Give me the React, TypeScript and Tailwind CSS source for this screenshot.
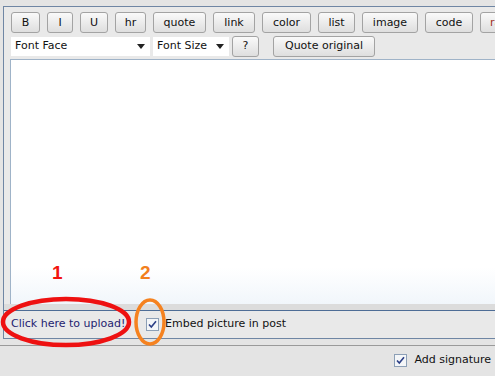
import React from 'react'

const font = { fontFamily: 'Tahoma, "DejaVu Sans", Verdana, sans-serif' }

const tools = [
  { label: 'B', w: 'w-[29px]' },
  { label: 'I', w: 'w-[26px]' },
  { label: 'U', w: 'w-[28px]' },
  { label: 'hr', w: 'w-[31px]' },
  { label: 'quote', w: 'w-[53px]' },
  { label: 'link', w: 'w-[42px]' },
  { label: 'color', w: 'w-[49px]' },
  { label: 'list', w: 'w-[37px]' },
  { label: 'image', w: 'w-[56px]' },
  { label: 'code', w: 'w-[48px]' },
  { label: 'raw', w: 'w-[40px]', red: true },
]

function ToolButton({ label, w, red }: { label: string; w: string; red?: boolean }) {
  return (
    <button
      className={`${w} h-[21px] shrink-0 rounded-[3px] border border-[#a3a3a3] bg-gradient-to-b from-[#fafafa] to-[#dedede] text-[11px] leading-none ${red ? 'text-[#a0301c] text-left pl-[9px]' : 'text-[#111]'}`}
    >
      {label}
    </button>
  )
}

function Check() {
  return (
    <svg width="13" height="13" viewBox="0 0 13 13" className="shrink-0">
      <rect x="0.5" y="0.5" width="12" height="12" fill="#f4f6f8" stroke="#8c9fb6" />
      <path d="M3 6.5 L5.3 9 L10 3.2" fill="none" stroke="#2c3f86" strokeWidth="1.6" />
    </svg>
  )
}

function Select({ label, w }: { label: string; w: string }) {
  return (
    <div className={`${w} h-[19px] bg-white flex items-center justify-between pl-[4px] pr-[5px] text-[11px] text-[#111]`}>
      <span>{label}</span>
      <svg width="8" height="5" viewBox="0 0 8 5">
        <path d="M0 0 H8 L4 5 Z" fill="#222" />
      </svg>
    </div>
  )
}

export default function App() {
  return (
    <div className="relative w-[495px] h-[376px] overflow-hidden bg-[#e4e4e4]" style={font}>
      <div className="pt-[6px]">
        <div className="ml-[3px] border-l border-t border-b border-[#6f86a4] bg-[#e9e9e9]">
          {/* toolbar */}
          <div className="pl-[7px] pt-[5px] flex flex-col gap-[3px]">
            <div className="flex gap-[7px]">
              {tools.map((t) => (
                <ToolButton key={t.label} {...t} />
              ))}
            </div>
            <div className="flex items-center h-[21px]">
              <Select label="Font Face" w="w-[139px]" />
              <div className="w-[3px]" />
              <Select label="Font Size" w="w-[76px]" />
              <div className="w-[3px]" />
              <button className="w-[27px] h-[21px] rounded-[3px] border border-[#a3a3a3] bg-gradient-to-b from-[#fafafa] to-[#dedede] text-[11px] text-[#111]">
                ?
              </button>
              <div className="w-[14px]" />
              <button className="w-[102px] h-[21px] rounded-[3px] border border-[#a3a3a3] bg-gradient-to-b from-[#fafafa] to-[#dedede] text-[11px] text-[#111]">
                Quote original
              </button>
            </div>
          </div>

          {/* textarea */}
          <div className="ml-[6px] mt-[2px] h-[245px] border-l border-t border-[#9fb3c8] bg-gradient-to-b from-white from-85% to-[#f1f6fb]" />
          <div className="h-[6px] bg-[#dcdcdc]" />

          {/* upload row */}
          <div className="h-[28px] border-t border-[#4e6d96] flex items-center pl-[7px] text-[11px]">
            <span className="text-[#1f2370] w-[135px]">Click here to upload!</span>
            <Check />
            <span className="ml-[6px] text-[#111]">Embed picture in post</span>
          </div>
        </div>
      </div>

      <div className="mt-[6px] border-t border-[#9a9a9a] flex items-center justify-end h-[30px] pr-[4px] text-[11px] text-[#111]">
        <Check />
        <span className="ml-[7px]">Add signature</span>
      </div>

      {/* annotations */}
      <span className="absolute left-[52px] top-[259px] text-[19px] font-bold text-[#f2140f]" style={{ fontFamily: '"Liberation Sans", Arial, sans-serif' }}>
        1
      </span>
      <span className="absolute left-[140px] top-[259px] text-[19px] font-bold text-[#f2801c]" style={{ fontFamily: '"Liberation Sans", Arial, sans-serif' }}>
        2
      </span>
      <svg className="absolute left-0 top-0 pointer-events-none" width="495" height="376">
        <ellipse cx="66" cy="322" rx="63" ry="23" fill="none" stroke="#ee1111" strokeWidth="4.5" />
        <ellipse cx="150" cy="322" rx="14" ry="22" fill="none" stroke="#f58220" strokeWidth="3.5" />
      </svg>
    </div>
  )
}
